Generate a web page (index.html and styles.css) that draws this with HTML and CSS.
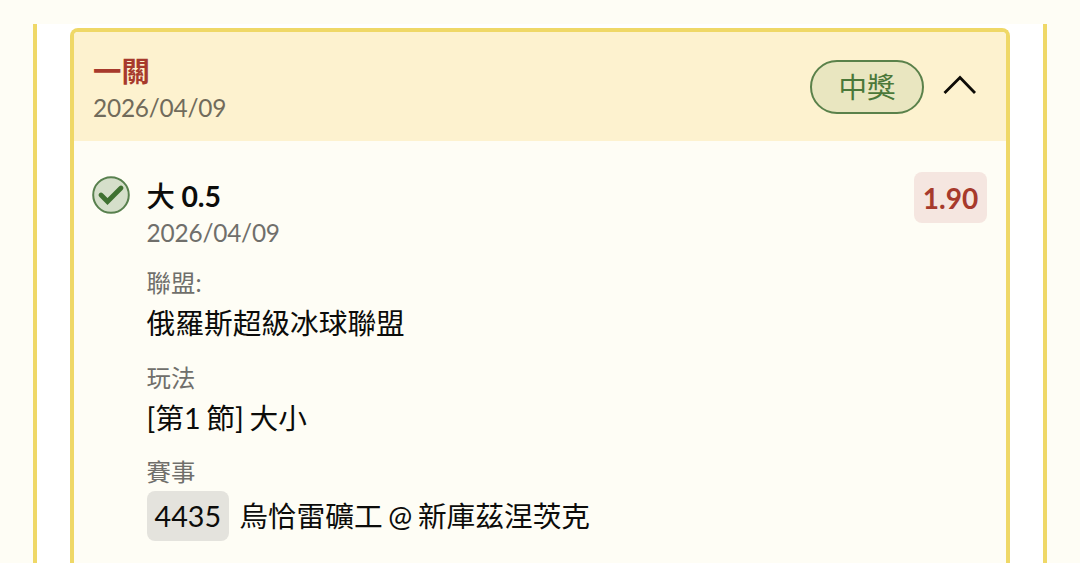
FILE: index.html
```html
<!DOCTYPE html>
<html lang="zh-Hant">

<head>
    <meta charset="UTF-8">
    <meta name="viewport" content="width=device-width, initial-scale=1.0">
    <title>一關</title>
    <link rel="stylesheet" href="styles.css">
</head>

<body>

    <div class="panel">
        <div class="card">
            <!-- Card header -->
            <div class="card-header">
                <div>
                    <h2 class="card-title">一關</h2>
                    <p class="date">2026/04/09</p>
                </div>
                <div class="card-status">
                    <span class="pill">中獎</span>
                    <svg class="chevron" viewBox="0 0 33 20">
                        <path d="M1.5 18 L17 2.5 L32 18" fill="none" stroke="#0d0b06" stroke-width="2.8" />
                    </svg>
                </div>
            </div>

            <!-- Bet details -->
            <div class="card-body">
                <svg class="check" viewBox="0 0 38 38">
                    <circle cx="19" cy="19" r="17.8" fill="#d5dfca" stroke="#58804e" stroke-width="2" />
                    <path d="M9 19 L15.5 25.5 L29 12" fill="none" stroke="#3f7131" stroke-width="4.8" stroke-linecap="round" />
                </svg>
                <div class="bet">
                    <h3 class="bet-title"><span class="pick">大</span> 0.5</h3>
                    <p class="date">2026/04/09</p>

                    <p class="label">聯盟:</p>
                    <p class="value">俄羅斯超級冰球聯盟</p>

                    <p class="label">玩法</p>
                    <p class="value">[第1 節] 大小</p>

                    <p class="label">賽事</p>
                    <p class="value match"><span class="code">4435</span><span>烏恰雷礦工 @ 新庫茲涅茨克</span></p>
                </div>
                <span class="odds">1.90</span>
            </div>
        </div>
    </div>

</body>

</html>
```

FILE: styles.css
```css
* {
    box-sizing: border-box;
}

body {
    font-family: Lato, 'Noto Sans CJK TC', sans-serif;
    background-color: #fefdf5;
    margin: 0;
    padding: 24px 33px 0;
    color: #0c0c0a;
}

h2, h3, p {
    margin: 0;
}

.panel {
    height: 539px;
    background-color: #fff;
    border: solid #efd867;
    border-width: 0 4px;
    padding: 4px 33px 0;
}

.card {
    height: 535px;
    background-color: #fefdf5;
    border: 4px solid #efd867;
    border-bottom: none;
    border-radius: 8px 8px 0 0;
}

.card-header {
    display: flex;
    justify-content: space-between;
    height: 109px;
    padding: 21px 30px 0 19px;
    background-color: #fdf2cf;
    border-radius: 4px 4px 0 0;
}

.card-title {
    color: #a73a2c;
    font-size: 28.4px;
    line-height: 36px;
}

.date {
    color: #706f6b;
    font-size: 24.4px;
    letter-spacing: -0.2px;
    line-height: 36px;
    padding-top: 1px;
}

.card-header .date {
    color: #716b5b;
}

.card-status {
    display: flex;
    align-items: center;
    gap: 19px;
    height: 54px;
    margin-top: 7px;
}

.pill {
    width: 114px;
    height: 54px;
    border: 2px solid #5a814a;
    border-radius: 27px;
    background-color: #e9e6c0;
    color: #4b7839;
    font-size: 28.5px;
    line-height: 50px;
    text-align: center;
}

.chevron {
    width: 33px;
    height: 20px;
    margin-bottom: 5px;
}

.card-body {
    display: flex;
    align-items: flex-start;
    padding: 31px 19px 0 18px;
}

.check {
    width: 38px;
    height: 38px;
    margin: 4px 16.6px 0 0;
}

.bet {
    flex: 1;
    padding-top: 6px;
}

.bet-title {
    font-size: 28.4px;
    line-height: 36px;
    word-spacing: -0.5px;
}

.pick {
    font-weight: 500;
}

.label {
    color: #706f6b;
    font-size: 24.4px;
    line-height: 36px;
    margin-top: 14.4px;
}

.value {
    font-size: 28.7px;
    line-height: 44px;
    word-spacing: -1.7px;
}

.match {
    display: flex;
    align-items: center;
    gap: 10px;
    padding-top: 1px;
}

.code {
    padding: 0 8px;
    height: 50px;
    line-height: 51px;
    border-radius: 8px;
    background-color: #e4e3dd;
}

.odds {
    width: 73px;
    height: 51px;
    border-radius: 8px;
    background-color: #f5e6e0;
    color: #a73a2c;
    font-size: 28px;
    font-weight: bold;
    line-height: 52px;
    text-align: center;
}
```
